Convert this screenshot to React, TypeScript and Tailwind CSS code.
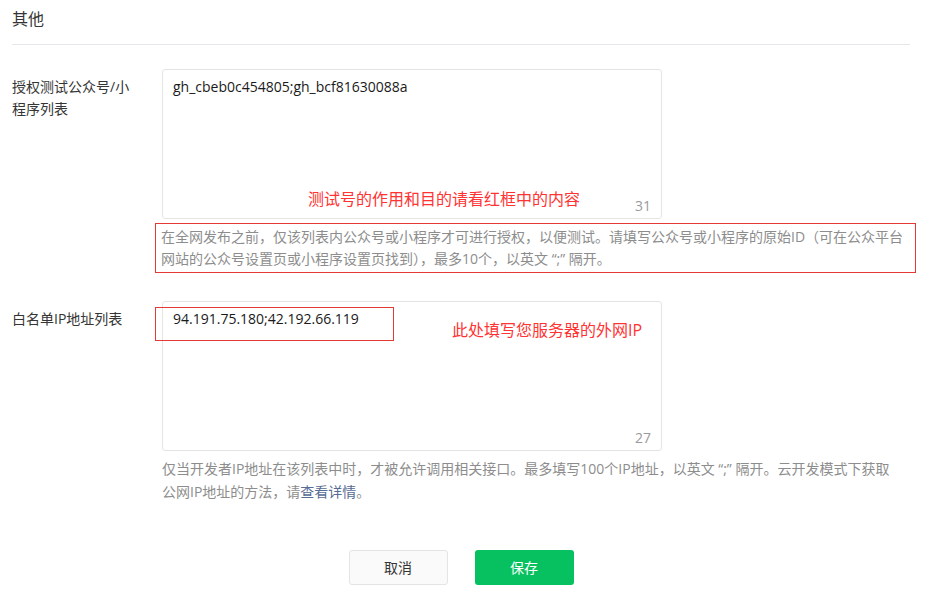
import React from 'react';

const font = { fontFamily: '"Open Sans", "Noto Sans CJK SC", sans-serif' };

function FieldBox({ value, count, children }: { value: string; count: number; children?: React.ReactNode }) {
  return (
    <div className="relative h-[150px] w-[500px] rounded-[3px] border border-[#e4e4e4] bg-white">
      <div className="px-[10px] pt-[6px] text-[14px] leading-[22px] text-[#1a1a1a]">{value}</div>
      <span className="absolute bottom-[1px] right-[10px] text-[14px] leading-[22px] text-[#9a9a9a]">{count}</span>
      {children}
    </div>
  );
}

export default function App() {
  return (
    <div className="min-h-[599px] w-[929px] bg-white text-[#353535]" style={font}>
      <div className="mx-[12px] w-[898px]">
        <div className="border-b border-[#e7e7eb] pt-[6px] pb-[12px] text-[16px] leading-[26px]">其他</div>

        {/* test accounts */}
        <div className="mt-[24px] flex">
          <div className="w-[150px] shrink-0 pt-[7px] pr-[24px] text-[14px] leading-[22px]">授权测试公众号/小程序列表</div>
          <div>
            <FieldBox value="gh_cbeb0c454805;gh_bcf81630088a" count={31}>
              <span className="absolute left-[145px] top-[117px] text-[16px] leading-[24px] text-[#f33]">
                测试号的作用和目的请看红框中的内容
              </span>
            </FieldBox>
            <div className="ml-[-7px] mt-[4px] w-[761px] border border-[#e53935] px-[5px] py-[2px] text-[14px] leading-[22px] text-[#8d8d8d]">
              在全网发布之前，仅该列表内公众号或小程序才可进行授权，以便测试。请填写公众号或小程序的原始ID（可在公众平台
              <br />
              网站的公众号设置页或小程序设置页找到），最多10个，以英文 “;” 隔开。
            </div>
          </div>
        </div>

        {/* ip whitelist */}
        <div className="mt-[28px] flex">
          <div className="w-[150px] shrink-0 pt-[7px] text-[14px] leading-[22px]">白名单IP地址列表</div>
          <div>
            <FieldBox value="94.191.75.180;42.192.66.119" count={27}>
              <span className="absolute left-[-8px] top-[5px] h-[34px] w-[239px] border border-[#e53935]" />
              <span className="absolute left-[289px] top-[16px] text-[16px] leading-[24px] text-[#f33]">
                此处填写您服务器的外网IP
              </span>
            </FieldBox>
            <div className="mt-[6px] text-[14px] leading-[23px] text-[#8d8d8d]">
              仅当开发者IP地址在该列表中时，才被允许调用相关接口。最多填写100个IP地址，以英文 “;” 隔开。云开发模式下获取
              <br />
              公网IP地址的方法，请<span className="text-[#576b95]">查看详情</span>。
            </div>
          </div>
        </div>

        <div className="mt-[47px] flex justify-center gap-[27px]">
          <button className="h-[35px] w-[99px] rounded-[3px] border border-[#e4e4e4] bg-[#fafafa] text-[14px] text-[#353535]">
            取消
          </button>
          <button className="h-[35px] w-[99px] rounded-[3px] bg-[#07c160] text-[14px] text-white">保存</button>
        </div>
      </div>
    </div>
  );
}
